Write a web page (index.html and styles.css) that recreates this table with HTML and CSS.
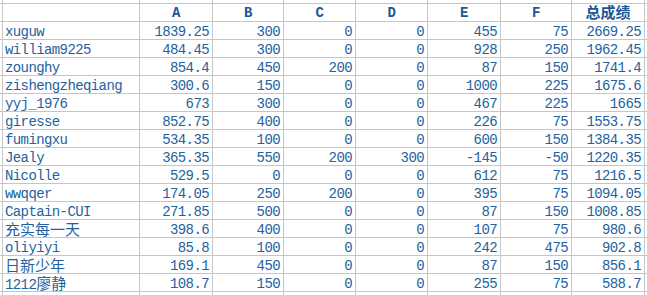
FILE: index.html
```html
<!DOCTYPE html>
<html lang="zh">
<head>
<meta charset="utf-8">
<title>成绩表</title>
<link rel="stylesheet" href="styles.css">
</head>
<body>
<div class="sheet">
  <div class="x"></div><div class="x"></div><div class="x"></div><div class="x"></div><div class="x"></div><div class="x"></div><div class="x"></div><div class="x"></div><div class="x"></div><div class="x"></div>

  <div class="x"></div><div class="h"></div><div class="h">A</div><div class="h">B</div><div class="h">C</div><div class="h">D</div><div class="h">E</div><div class="h">F</div><div class="h cjk-h">总成绩</div><div class="x"></div>

  <div class="x"></div><div class="n">xuguw</div><div>1839.25</div><div>300</div><div>0</div><div>0</div><div>455</div><div>75</div><div>2669.25</div><div class="x"></div>
  <div class="x"></div><div class="n">william9225</div><div>484.45</div><div>300</div><div>0</div><div>0</div><div>928</div><div>250</div><div>1962.45</div><div class="x"></div>
  <div class="x"></div><div class="n">zounghy</div><div>854.4</div><div>450</div><div>200</div><div>0</div><div>87</div><div>150</div><div>1741.4</div><div class="x"></div>
  <div class="x"></div><div class="n">zishengzheqiang</div><div>300.6</div><div>150</div><div>0</div><div>0</div><div>1000</div><div>225</div><div>1675.6</div><div class="x"></div>
  <div class="x"></div><div class="n">yyj_1976</div><div>673</div><div>300</div><div>0</div><div>0</div><div>467</div><div>225</div><div>1665</div><div class="x"></div>
  <div class="x"></div><div class="n">giresse</div><div>852.75</div><div>400</div><div>0</div><div>0</div><div>226</div><div>75</div><div>1553.75</div><div class="x"></div>
  <div class="x"></div><div class="n">fumingxu</div><div>534.35</div><div>100</div><div>0</div><div>0</div><div>600</div><div>150</div><div>1384.35</div><div class="x"></div>
  <div class="x"></div><div class="n">Jealy</div><div>365.35</div><div>550</div><div>200</div><div>300</div><div>-145</div><div>-50</div><div>1220.35</div><div class="x"></div>
  <div class="x"></div><div class="n">Nicolle</div><div>529.5</div><div>0</div><div>0</div><div>0</div><div>612</div><div>75</div><div>1216.5</div><div class="x"></div>
  <div class="x"></div><div class="n">wwqqer</div><div>174.05</div><div>250</div><div>200</div><div>0</div><div>395</div><div>75</div><div>1094.05</div><div class="x"></div>
  <div class="x"></div><div class="n">Captain-CUI</div><div>271.85</div><div>500</div><div>0</div><div>0</div><div>87</div><div>150</div><div>1008.85</div><div class="x"></div>
  <div class="x"></div><div class="n"><span class="cjk">充实每一天</span></div><div>398.6</div><div>400</div><div>0</div><div>0</div><div>107</div><div>75</div><div>980.6</div><div class="x"></div>
  <div class="x"></div><div class="n">oliyiyi</div><div>85.8</div><div>100</div><div>0</div><div>0</div><div>242</div><div>475</div><div>902.8</div><div class="x"></div>
  <div class="x"></div><div class="n"><span class="cjk">日新少年</span></div><div>169.1</div><div>450</div><div>0</div><div>0</div><div>87</div><div>150</div><div>856.1</div><div class="x"></div>
  <div class="x"></div><div class="n">1212<span class="cjk">廖静</span></div><div>108.7</div><div>150</div><div>0</div><div>0</div><div>255</div><div>75</div><div>588.7</div><div class="x"></div>

  <div class="x"></div><div class="x"></div><div class="x"></div><div class="x"></div><div class="x"></div><div class="x"></div><div class="x"></div><div class="x"></div><div class="x"></div><div class="x"></div>
</div>
</body>
</html>
```

FILE: styles.css
```css
html, body {
  margin: 0;
  padding: 0;
  background: #ffffff;
  overflow: hidden;
}

.sheet {
  display: grid;
  grid-template-columns: 2px 136px 72px 70px 71px 71px 72px 70px 72px 1fr;
  grid-template-rows: 3px repeat(16, 17px) 1fr;
  gap: 1px;
  height: 100vh;
  background: #c6c6c6;
  font-family: "Liberation Mono", "Noto Sans CJK SC", monospace;
  font-size: 14px;
  letter-spacing: -0.6px;
  color: #24629e;
}

.sheet > div {
  background: #ffffff;
  text-align: right;
  padding: 2px 3px 0 2px;
  line-height: 17px;
  height: 17px;
  box-sizing: border-box;
  white-space: nowrap;
}

.sheet > .x {
  padding: 0;
  height: auto;
}

.sheet > .n {
  text-align: left;
}

.sheet > .h {
  text-align: center;
  font-weight: bold;
  color: #1b5796;
  padding: 0;
  line-height: 18px;
}

.sheet > .cjk-h {
  font-family: "Noto Sans CJK SC", sans-serif;
  font-size: 15px;
  letter-spacing: 0;
  line-height: 16px;
}

.cjk {
  font-family: "Noto Sans CJK SC", sans-serif;
  font-size: 15px;
  letter-spacing: 0;
  line-height: 14px;
}
```
